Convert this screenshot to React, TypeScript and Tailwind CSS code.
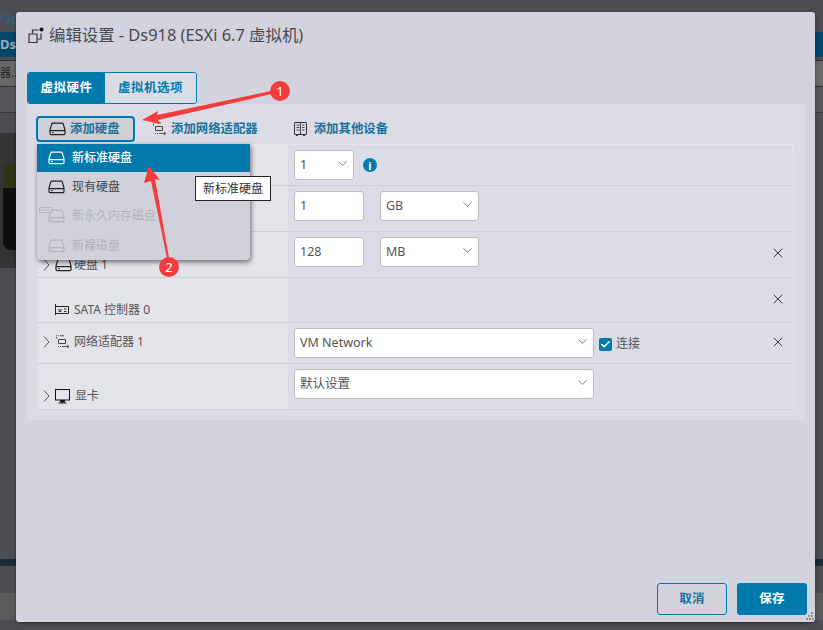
import { ChevronDown, X, Check } from "lucide-react";
import React from "react";

const FONT = "font-['Noto_Sans','Noto_Sans_CJK_SC',sans-serif]";

function DiskIcon({ className = "text-[#222]" }: { className?: string }) {
  return (
    <svg width="17" height="14" viewBox="0 0 17 14" fill="none" stroke="currentColor" strokeWidth="1.2" className={className}>
      <path d="M4 1.2h9q1 0 1.3 1L16 8v3.6a1 1 0 0 1-1 1H2a1 1 0 0 1-1-1V8l1.7-5.8q.3-1 1.3-1z" />
      <path d="M1 8.6h15" />
      <path d="M3 10.6h2" strokeWidth="0.9" />
    </svg>
  );
}

function NetIcon() {
  return (
    <svg width="16" height="14" viewBox="0 0 16 14" fill="none" stroke="#444" strokeWidth="1">
      <path d="M1 .8h1M3 .8h1M5 .8h4" strokeWidth="0.9" />
      <path d="M1.5 2v1.5M3.5 4.5h7v4h-7z" />
      <path d="M3 11.5h1M5 11.5h1M7 11.5h6M12 10l2 1.5-2 1.5" strokeWidth="0.9" />
    </svg>
  );
}

function OtherIcon() {
  return (
    <svg width="13" height="14" viewBox="0 0 13 14" fill="none" stroke="#333" strokeWidth="1">
      <rect x="0.5" y="0.5" width="12" height="12" rx="0.5" />
      <path d="M2.5 3h3M2.5 5.5h3M2.5 8h3M8 3h2.5M8 5.5h2.5M8 8h2.5M2 13.5h2M9 13.5h2M6.5 1v11" strokeWidth="0.9" />
    </svg>
  );
}

function CardIcon() {
  return (
    <svg width="14" height="12" viewBox="0 0 14 12" fill="none" stroke="#222" strokeWidth="1">
      <path d="M.5 0v11M.5 2.5h13v7h-13" />
      <path d="M4 5v2.5h2V5M9 5h2.5M9 7.5h2.5" strokeWidth="0.9" />
    </svg>
  );
}

function MonitorIcon() {
  return (
    <svg width="15" height="15" viewBox="0 0 15 15" fill="none" stroke="#111" strokeWidth="1">
      <rect x="0.5" y="0.5" width="14" height="10.5" />
      <path d="M5.5 11.5h4v1.5h-4zM3.5 14h8" fill="#111" />
    </svg>
  );
}

function VmIcon() {
  return (
    <svg width="16" height="17" viewBox="0 0 16 17" fill="none" stroke="#333" strokeWidth="1.2">
      <path d="M1 7h8v8.5H1z" />
      <path d="M4.5 6.5V3H11" />
      <path d="M9.5 12H13V6.5" />
      <circle cx="13.5" cy="2.5" r="2" fill="#111" stroke="none" />
    </svg>
  );
}

function Caret() {
  return (
    <svg width="7" height="14" viewBox="0 0 7 14" fill="none" stroke="#555" strokeWidth="1" className="ml-[6px] mr-[5px] shrink-0">
      <path d="M1 1.5L6 7L1 12.5" />
    </svg>
  );
}

function SelectBox({ value, width }: { value: string; width: string }) {
  return (
    <div className={`flex h-[30px] items-center justify-between rounded-[3px] border border-[#bcbcc0] bg-white pl-[5px] pr-[3px] text-[12.5px] text-[#555] ${width}`}>
      <span>{value}</span>
      <ChevronDown size={15} strokeWidth={1} className="mb-[3px] text-[#333]" />
    </div>
  );
}

function InputBox({ value }: { value: string }) {
  return (
    <div className="flex h-[30px] w-[70px] items-center rounded-[3px] border border-[#bcbcc0] bg-white pl-[5px] text-[12.5px] text-[#555]">
      {value}
    </div>
  );
}

function Row({
  height,
  label,
  children,
  remove,
}: {
  height: string;
  label?: React.ReactNode;
  children?: React.ReactNode;
  remove?: boolean;
}) {
  return (
    <div className={`flex border-b border-[#cfcfd6] ${height}`}>
      <div className="flex w-[251px] shrink-0 bg-[#e3e4ea] text-[12px] text-[#555]">{label}</div>
      <div className="flex flex-1 items-start gap-[16px] pl-[6px] pt-[5px]">{children}</div>
      {remove && (
        <div className="flex w-[30px] items-center justify-center pb-[3px]">
          <X size={16} strokeWidth={1.2} className="text-[#111]" />
        </div>
      )}
    </div>
  );
}

function MenuItem({
  label,
  active,
  muted,
  height,
}: {
  label: string;
  active?: boolean;
  muted?: boolean;
  height: string;
}) {
  const tone = active ? "bg-[#0079ad] text-white font-medium" : muted ? "text-[#b4b4ba]" : "text-[#444]";
  return (
    <div className={`flex items-center gap-[7px] pl-[11px] text-[12px] ${height} ${tone}`}>
      <DiskIcon className={active ? "text-white" : muted ? "text-[#b4b4ba]" : "text-[#222]"} />
      {label}
    </div>
  );
}

export default function App() {
  return (
    <div className={`relative h-[630px] w-[823px] overflow-hidden bg-[#4c4d51] ${FONT}`}>
      {/* page behind the dialog */}
      <div className="flex h-[32px] items-end text-[14px] font-semibold leading-[26px] text-[#2c5f7c]">Op</div>
      <div className="flex h-[25px] items-center bg-[#01486a] text-[13px] font-bold text-[#9ab]">Ds</div>
      <div className="mt-[3px] flex h-[27px] items-center border-y border-[#2f3033] bg-[#68696b] text-[11px] text-[#222]">器...</div>
      <div className="h-[25px] bg-[#555659]" />
      <div className="h-px bg-[#38393c]" />
      <div className="mt-[20px] h-[135px] w-[16px] overflow-hidden bg-[#333436]">
        <div className="ml-[3px] mt-[30px] h-[25px] rounded-tl-[8px] bg-[#2f3515]" />
        <div className="ml-[3px] h-[62px] rounded-bl-[8px] bg-[#0e0f0c]" />
      </div>
      <div className="mt-[291px] h-[7px] bg-[#1c2b37]" />
      <div className="mt-[27px] h-[27px] bg-[#5a5b5d]" />

      {/* dialog */}
      <div className="absolute left-[16px] top-[12px] flex h-[610px] w-[799px] flex-col rounded-[3px] bg-[#d3d3df] shadow-[0_1px_3px_rgba(0,0,0,0.5)]">
        <div className="flex h-[46px] items-center gap-[5px] pl-[12px] text-[16.4px] text-[#4a4a4c]">
          <VmIcon />
          <span>编辑设置 - Ds918 (ESXi 6.7 虚拟机)</span>
        </div>
        <div className="ml-[11px] mt-[14px] flex h-[32px] w-[170px] overflow-hidden rounded-[3px] border border-[#0079ad] text-[12.5px] font-semibold tracking-[0.5px]">
          <div className="flex w-[77px] items-center justify-center bg-[#0079ad] text-white">虚拟硬件</div>
          <div className="flex flex-1 items-center justify-center bg-[#dcdce6] text-[#0079ad]">虚拟机选项</div>
        </div>
        <div className="ml-[11px] h-[316px] w-[778px] bg-[#dcdce6] px-[10px]">
          <div className="flex h-[40px] items-end pb-[2px] text-[12.4px] font-semibold text-[#1b7199]">
            <div className="-ml-[1px] flex h-[26px] w-[99px] items-center gap-[4px] rounded-[4px] border-2 border-[#0079ad] bg-[#cfcfd7] pl-[11px]">
              <DiskIcon />
              添加硬盘
            </div>
            <div className="ml-[17px] flex h-[26px] items-center gap-[3px]">
              <NetIcon />
              添加网络适配器
            </div>
            <div className="ml-[36px] flex h-[26px] items-center gap-[7px]">
              <OtherIcon />
              添加其他设备
            </div>
          </div>
          <div className="w-[757px] border-r border-t border-[#e6e6ec]">
            <Row height="h-[41px]">
              <SelectBox value="1" width="w-[60px]" />
              <div className="-ml-[7px] mt-[8px] flex h-[14px] w-[14px] items-center justify-center rounded-full bg-[#0079ad] text-[11px] font-bold leading-none text-white">
                i
              </div>
            </Row>
            <Row height="h-[46px]">
              <InputBox value="1" />
              <SelectBox value="GB" width="w-[99px]" />
            </Row>
            <Row
              height="h-[46px]"
              remove
              label={
                <div className="flex items-center pt-[20px]">
                  <Caret />
                  <DiskIcon />
                  <span className="ml-[2px]">硬盘 1</span>
                </div>
              }
            >
              <InputBox value="128" />
              <SelectBox value="MB" width="w-[99px]" />
            </Row>
            <Row
              height="h-[45px]"
              remove
              label={
                <div className="ml-[18px] flex items-center gap-[5px] pt-[20px]">
                  <CardIcon />
                  <span>SATA 控制器 0</span>
                </div>
              }
            />
            <Row
              height="h-[41px]"
              remove
              label={
                <div className="flex items-center pb-[3px]">
                  <Caret />
                  <NetIcon />
                  <span className="ml-[3px]">网络适配器 1</span>
                </div>
              }
            >
              <SelectBox value="VM Network" width="w-[300px]" />
              <div className="-ml-[11px] mt-[7px] flex items-center gap-[4px] text-[12px] text-[#555]">
                <div className="flex h-[13px] w-[13px] items-center justify-center rounded-[2px] bg-[#0079ad]">
                  <Check size={11} strokeWidth={3.5} className="text-white" />
                </div>
                连接
              </div>
            </Row>
            <Row
              height="h-[46px]"
              label={
                <div className="flex items-center pt-[19px]">
                  <Caret />
                  <MonitorIcon />
                  <span className="ml-[5px]">显卡</span>
                </div>
              }
            >
              <SelectBox value="默认设置" width="w-[300px]" />
            </Row>
          </div>
        </div>
        <div className="mt-auto mb-[7px] mr-[8px] flex justify-end gap-[10px] text-[12.5px] font-semibold tracking-[0.3px]">
          <div className="flex h-[32px] w-[70px] items-center justify-center rounded-[3px] border border-[#0079ad] text-[#1b7199]">取消</div>
          <div className="flex h-[32px] w-[70px] items-center justify-center rounded-[3px] bg-[#0079ad] text-white">保存</div>
        </div>
      </div>

      {/* dropdown menu */}
      <div className="absolute left-[37px] top-[144px] h-[116px] w-[213px] overflow-hidden rounded-b-[4px] bg-[#d1d1dc] shadow-[1px_2px_5px_rgba(0,0,0,0.55)]">
        <MenuItem label="新标准硬盘" active height="h-[28px]" />
        <MenuItem label="现有硬盘" height="h-[29px]" />
        <MenuItem label="新永久内存磁盘" muted height="h-[30px]" />
        <MenuItem label="新裸磁盘" muted height="h-[29px]" />
      </div>
      <svg width="14" height="8" viewBox="0 0 14 8" fill="none" stroke="#b4b4ba" strokeWidth="1" className="absolute left-[39px] top-[207px]">
        <rect x="0.5" y="0.5" width="13" height="5" rx="1" />
        <path d="M3 2v2M6 2v2M9 2v2" />
      </svg>

      {/* tooltip */}
      <div className="absolute left-[195px] top-[176px] flex h-[25px] w-[76px] items-center justify-center border border-[#222] bg-white text-[12px] text-[#333]">
        新标准硬盘
      </div>

      {/* red annotations */}
      <svg width="823" height="630" viewBox="0 0 823 630" className="pointer-events-none absolute left-0 top-0">
        <path d="M142 120L158 111L157 115L271 91L272 94L158 120L160 124Z" fill="#f53c3c" />
        <path d="M149 166L160 180L155 179L169 258L167 258L151 181L144 183Z" fill="#f53c3c" />
        <circle cx="280" cy="91" r="10" fill="#f53c3c" />
        <circle cx="169" cy="267" r="10" fill="#f53c3c" />
        <text x="280" y="96" textAnchor="middle" fontSize="13" fill="#fff" fontFamily="Noto Sans">1</text>
        <text x="169" y="272" textAnchor="middle" fontSize="13" fill="#fff" fontFamily="Noto Sans">2</text>
      </svg>

      {/* dialog resize grip */}
      <svg width="8" height="8" viewBox="0 0 8 8" fill="#8d8d94" className="absolute left-[806px] top-[612px]">
        <rect x="5" y="0" width="2" height="2" />
        <rect x="2" y="3" width="2" height="2" />
        <rect x="5" y="3" width="2" height="2" />
        <rect x="0" y="6" width="2" height="2" />
        <rect x="3" y="6" width="2" height="2" />
        <rect x="6" y="6" width="2" height="2" />
      </svg>
    </div>
  );
}
